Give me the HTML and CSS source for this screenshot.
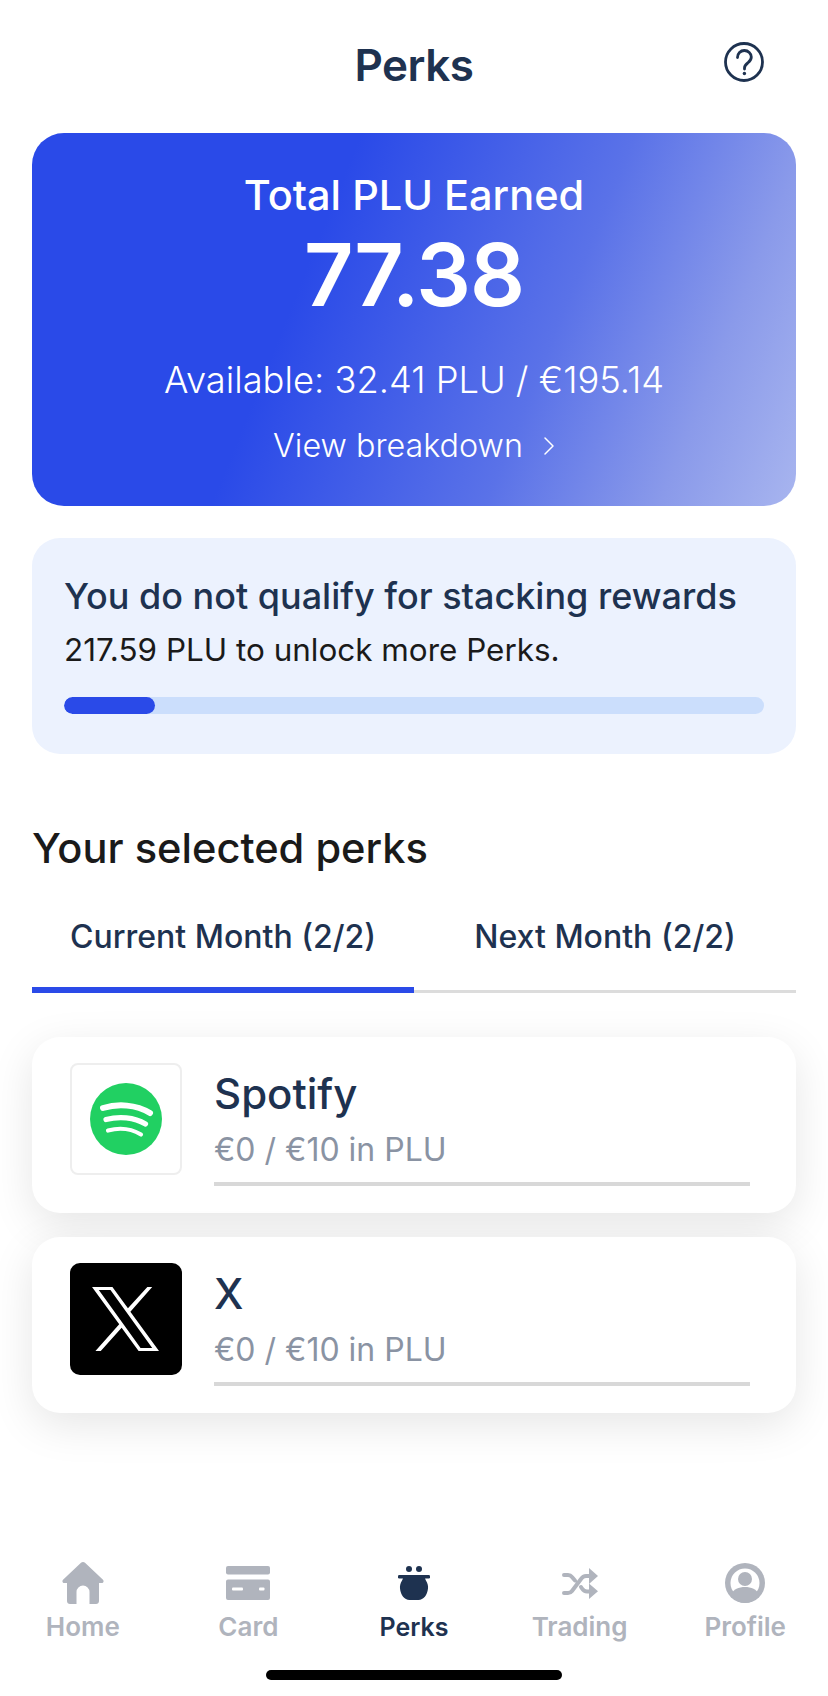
FILE: index.html
```html
<!DOCTYPE html>
<html lang="en">
<head>
<meta charset="utf-8">
<title>Perks</title>
<link rel="stylesheet" href="styles.css">
</head>
<body>
<div class="screen">
  <header class="topbar">
    <h1 class="page-title">Perks</h1>
    <svg class="help" viewBox="0 0 40 40" width="40" height="40" fill="none" stroke="#1e3250" stroke-width="2.8" stroke-linecap="round">
      <circle cx="20" cy="20" r="18.500"/>
      <path d="M13.500 15.500c0-4 3-7 6.800-7 4 0 7 3 7 6.500 0 3-1.700 4.500-3.600 6-1.900 1.400-3.200 2.700-3.200 5v1"/>
      <circle cx="20.400" cy="31.500" r="1.700" fill="#1e3250" stroke="none"/>
    </svg>
  </header>

  <section class="hero">
    <div class="hero-title">Total PLU Earned</div>
    <div class="hero-value">77.38</div>
    <div class="hero-avail">Available: 32.41 PLU / €195.14</div>
    <div class="hero-link">View breakdown
      <svg class="chev" viewBox="0 0 12 20" width="12" height="20" fill="none" stroke="#fff" stroke-width="1.500" stroke-linecap="round" stroke-linejoin="round"><path d="M2 2l8 8-8 8"/></svg>
    </div>
  </section>

  <section class="notice">
    <div class="notice-title">You do not qualify for stacking rewards</div>
    <div class="notice-sub">217.59 PLU to unlock more Perks.</div>
    <div class="progress"><div class="progress-fill" style="width:13%"></div></div>
  </section>

  <h2 class="section-title">Your selected perks</h2>

  <nav class="tabs">
    <div class="tab tab-active">Current Month (2/2)</div>
    <div class="tab">Next Month (2/2)</div>
  </nav>

  <div class="perk-list">
    <article class="perk">
      <div class="logo logo-spotify">
        <svg viewBox="0 0 72 72" width="72" height="72" fill="none" stroke="#fff" stroke-linecap="round">
          <circle cx="36" cy="36" r="36" fill="#21d062" stroke="none"/>
          <path d="M13 25c15-4.500 33-3.500 47 5" stroke-width="6"/>
          <path d="M16 36.500c13-3.500 28-2.500 39.500 4.500" stroke-width="5.200"/>
          <path d="M18 47.500c11-3 23-2 33 4" stroke-width="4.200"/>
        </svg>
      </div>
      <div class="perk-body">
        <div class="perk-name">Spotify</div>
        <div class="perk-amount">€0 / €10 in PLU</div>
        <div class="perk-bar"></div>
      </div>
    </article>
    <article class="perk">
      <div class="logo logo-x">
        <svg viewBox="0 0 72 68" width="70" height="66">
          <path fill="#fff" fill-rule="evenodd" d="M1 1h21l16 22L58 1h5L40.500 26.500 70 67H49L31.500 43 10 67H4.500L29 39.500zM8 4l43 60h12L20 4z"/>
        </svg>
      </div>
      <div class="perk-body">
        <div class="perk-name">X</div>
        <div class="perk-amount">€0 / €10 in PLU</div>
        <div class="perk-bar"></div>
      </div>
    </article>
  </div>

  <footer class="tabbar">
    <div class="nav-item">
      <span class="nav-icon">
        <svg viewBox="0 0 42 42" width="42" height="42" fill="#b0b4bd"><path d="M21 0c.8 0 1.500.3 2 .8l18 17c1.200 1.200.4 3.200-1.200 3.200H37v18c0 1.700-1.300 3-3 3h-6.500V30a6.500 6.500 0 0 0-13 0v12H8c-1.700 0-3-1.300-3-3V21H2.200C.6 21-.2 19 1 17.800l18-17c.5-.5 1.200-.8 2-.8z"/></svg>
      </span>
      <span class="nav-label">Home</span>
    </div>
    <div class="nav-item">
      <span class="nav-icon">
        <svg viewBox="0 0 44 34" width="44" height="34" fill="#b0b4bd"><rect width="44" height="8.500" rx="2"/><path d="M2 13.500h40a2 2 0 0 1 2 2V32a2 2 0 0 1-2 2H2a2 2 0 0 1-2-2V15.500a2 2 0 0 1 2-2z"/><rect x="6" y="21.500" width="11" height="3" rx="1" fill="#fff"/><rect x="33" y="21.500" width="5.500" height="3" rx="1" fill="#fff"/></svg>
      </span>
      <span class="nav-label">Card</span>
    </div>
    <div class="nav-item nav-active">
      <span class="nav-icon">
        <svg viewBox="0 0 32 34" width="32" height="34" fill="#1e3250"><circle cx="11" cy="3" r="3"/><circle cx="21" cy="3" r="3"/><rect y="9" width="32" height="3.500" rx="1.200"/><path d="M5 12h22c.3 2 2 3.500 2.700 6.500.3 1.200.5 2.500.3 4-.6 6.500-4.500 11.500-9.500 11.500h-9C6.500 34 2.600 29 2 22.500c-.2-1.500 0-2.800.3-4C3 15.500 4.700 14 5 12z"/></svg>
      </span>
      <span class="nav-label">Perks</span>
    </div>
    <div class="nav-item">
      <span class="nav-icon">
        <svg viewBox="0 0 36 31" width="36" height="31" fill="none"><path d="M2 25h4c2 0 3-.7 4-2L19 11c1.200-1.800 2.500-3 5-3h4M2 7h4c2 0 3 .7 4 2l3 3.500M19 19l1 1.500c1.200 1.800 2.500 3 5 3h3" stroke="#b0b4bd" stroke-width="4" stroke-linecap="round"/><path d="M27 0l9 8-9 8zM27 15.500l9 7.750-9 7.750z" fill="#b0b4bd"/></svg>
      </span>
      <span class="nav-label">Trading</span>
    </div>
    <div class="nav-item">
      <span class="nav-icon">
        <svg viewBox="0 0 40 40" width="40" height="40"><circle cx="20" cy="20" r="20" fill="#b0b4bd"/><circle cx="20" cy="20" r="14.500" fill="#fff"/><circle cx="20" cy="16" r="7" fill="#b0b4bd"/><path d="M6 32c2-6 8-8 14-8s12 2 14 8c-3 5-9 8-14 8S9 37 6 32z" fill="#b0b4bd"/></svg>
      </span>
      <span class="nav-label">Profile</span>
    </div>
  </footer>
  <div class="home-indicator"></div>
</div>
</body>
</html>
```
FILE: styles.css
```css
* { box-sizing: border-box; margin: 0; padding: 0; }
html, body { background: #fff; }
body { font-family: Inter, "Liberation Sans", sans-serif; }
.screen { width: 828px; height: 1696px; display: flex; flex-direction: column; padding: 0 32px; position: relative; overflow: hidden; }

.topbar { height: 133px; flex: none; position: relative; display: flex; justify-content: center; align-items: flex-start; padding-top: 40px; }
.page-title { font-size: 44px; line-height: 50px; font-weight: 600; color: #1e3250; letter-spacing: -0.5px; }
.help { position: absolute; right: 32px; top: 42px; }

.hero { height: 373px; flex: none; border-radius: 32px; color: #fff; text-align: center; padding-top: 38px;
  background: linear-gradient(112deg, #2a4ae8 0%, #2a4ae8 36%, #5a72e8 66%, #8a9aea 85%, #a8b5ef 100%); }
.hero-title { font-size: 41.5px; line-height: 48px; font-weight: 500; }
.hero-value { font-size: 86px; line-height: 92px; font-weight: 600; margin-top: 10px; letter-spacing: -1px; }
.hero-avail { font-size: 36.300px; line-height: 44px; font-weight: 300; margin-top: 37px; }
.hero-link { font-size: 32.300px; line-height: 40px; font-weight: 300; margin-top: 24px; display: flex; justify-content: center; align-items: center; gap: 20px; }

.notice { margin-top: 32px; height: 216px; flex: none; background: #ecf2fe; border-radius: 28px; padding: 36px 32px 0; }
.notice-title { font-size: 36px; line-height: 44px; font-weight: 500; color: #1e3250; }
.notice-sub { font-size: 31.450px; line-height: 40px; font-weight: 400; color: #1a1a1a; margin-top: 12px; }
.progress { height: 17px; margin-top: 27px; border-radius: 9px; background: #cbdefc; overflow: hidden; }
.progress-fill { height: 100%; border-radius: 9px; background: #2a4ae8; }

.section-title { font-size: 41.6px; line-height: 48px; font-weight: 500; color: #1a1a1a; margin-top: 70px; }

.tabs { display: flex; height: 77px; margin-top: 44px; flex: none; border-bottom: 3px solid #dcdcdc; }
.tab { flex: 1; font-size: 32px; line-height: 40px; font-weight: 500; color: #1e3250; text-align: center; padding-top: 1px; }
.tab-active { border-bottom: 6px solid #2a4ae8; margin-bottom: -3px; }

.perk-list { display: flex; flex-direction: column; gap: 24px; margin-top: 44px; }
.perk { height: 176px; background: #fff; border-radius: 28px; box-shadow: 0 12px 44px rgba(0,0,0,.1); display: flex; padding: 26px 46px 0 38px; gap: 32px; }
.logo { width: 112px; height: 112px; flex: none; border-radius: 8px; display: flex; align-items: center; justify-content: center; }
.logo-spotify { border: 2px solid #eeeeee; }
.logo-x { background: #000; border-radius: 10px; }
.perk-body { flex: 1; min-width: 0; }
.perk-name { font-size: 42px; line-height: 48px; font-weight: 500; color: #1e3250; margin-top: 7px; }
.perk-amount { font-size: 32px; line-height: 40px; font-weight: 400; color: #8a93a3; margin-top: 12px; }
.perk-bar { height: 4px; margin-top: 12px; background: #d8d8d8; }

.tabbar { position: absolute; left: 0; right: 0; top: 1560px; display: grid; grid-template-columns: repeat(5, 1fr); }
.nav-item { display: flex; flex-direction: column; align-items: center; }
.nav-icon { height: 46px; display: flex; align-items: center; justify-content: center; }
.nav-label { font-size: 26px; line-height: 36px; font-weight: 600; color: #b0b4bd; margin-top: 3px; }
.nav-active .nav-label { color: #1e3250; font-size: 25px; }
.home-indicator { position: absolute; left: 266px; top: 1670px; width: 296px; height: 10px; border-radius: 5px; background: #000; }
```
